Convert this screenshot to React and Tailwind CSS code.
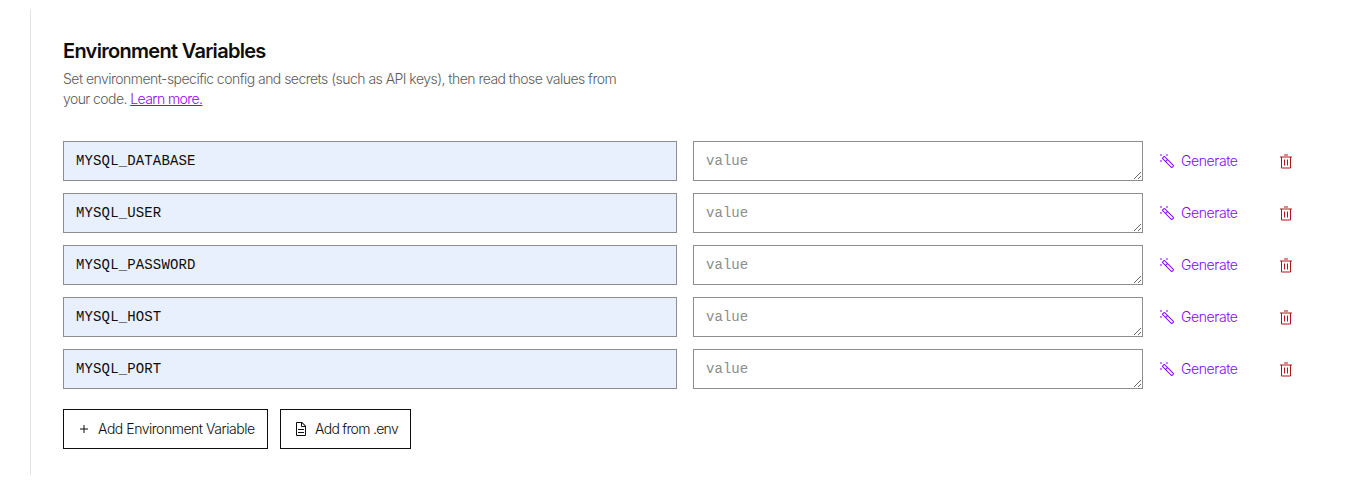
const VARIABLES = ['MYSQL_DATABASE', 'MYSQL_USER', 'MYSQL_PASSWORD', 'MYSQL_HOST', 'MYSQL_PORT'];

function Icon({ children, className = '' }) {
  return (
    <svg viewBox="0 0 32 32" fill="currentColor" aria-hidden="true" className={`size-4 shrink-0 ${className}`}>
      {children}
    </svg>
  );
}

function WandIcon() {
  return (
    <Icon>
      <path d="M29.414 24 12 6.586a2.048 2.048 0 0 0-2.828 0L6.586 9.172a2.002 2.002 0 0 0 0 2.828l17.413 17.414a2.002 2.002 0 0 0 2.828 0l2.587-2.586a2 2 0 0 0 0-2.828ZM8 10.586 10.586 8l5 5-2.587 2.587-5-5ZM25.413 28l-11-10.999L17 14.414l11 10.999Z" />
      <rect x="2.586" y="14.586" width="2.828" height="2.828" transform="rotate(-45 4 16)" />
      <rect x="14.586" y="2.586" width="2.828" height="2.828" transform="rotate(-45 16 4)" />
      <rect x="2.586" y="2.586" width="2.828" height="2.828" transform="rotate(-45 4 4)" />
    </Icon>
  );
}

function TrashIcon() {
  return (
    <Icon>
      <path
        transform="translate(0 1)"
        d="M12 12h2v12h-2zM18 12h2v12h-2zM4 6v2h2v20a2 2 0 0 0 2 2h16a2 2 0 0 0 2-2V8h2V6zm4 22V8h16v20zM12 2h8v2h-8z"
      />
    </Icon>
  );
}

function VariableRow({ name }) {
  return (
    <div className="flex h-10 items-center">
      <input
        defaultValue={name}
        className="h-10 w-[614px] border border-[#8d8d8d] bg-[#e8f0fe] px-3 font-['Liberation_Mono',monospace] text-sm tracking-[0.14px] text-[#0d0d0d] outline-none"
      />
      <textarea
        placeholder="value"
        rows={1}
        className="ml-4 h-10 w-[450px] resize-y overflow-hidden border border-[#8d8d8d] bg-white px-3 pt-[9px] pb-[7px] font-['Liberation_Mono',monospace] text-sm leading-5 tracking-[0.05px] outline-none placeholder:text-[#8d8d8d]"
      />
      <button className="ml-4 flex w-[119px] items-center gap-1.5 text-sm text-[#8a05ff]">
        <WandIcon />
        <span className="font-light tracking-[-0.4px]">Generate</span>
      </button>
      <button aria-label="Delete" className="text-[#b3131f]">
        <TrashIcon />
      </button>
    </div>
  );
}

export default function App() {
  return (
    <main className="h-[485px] bg-white py-2.5 pl-[30px] font-['Inter',sans-serif] text-[#0d0d0d]">
      <section className="h-[465px] border-l border-[#e3e3e3] pl-8 pt-[27px]">
        <h2 className="text-xl leading-7 font-semibold tracking-[-0.7px]">Environment Variables</h2>
        <p className="mt-1 w-[570px] text-sm leading-5 font-light tracking-[-0.53px] whitespace-nowrap text-[#5c5c5c]">
          Set environment-specific config and secrets (such as API keys), then read those values from
          <br />
          <span className="tracking-[-0.58px]">
            your code. <a className="text-[#8a05ff] underline">Learn more.</a>
          </span>
        </p>
        <div className="mt-8 flex flex-col gap-3">
          {VARIABLES.map((name) => (
            <VariableRow key={name} name={name} />
          ))}
        </div>
        <div className="mt-5 flex gap-3 text-sm font-light">
          <button className="flex h-10 w-[205px] items-center gap-1.5 border border-[#0d0d0d] pl-3 whitespace-nowrap">
            <Icon>
              <path d="M17 15V8h-2v7H8v2h7v7h2v-7h7v-2z" />
            </Icon>
            <span className="tracking-[-0.47px]">Add Environment Variable</span>
          </button>
          <button className="flex h-10 w-[131px] items-center gap-1.5 border border-[#0d0d0d] pl-3 whitespace-nowrap">
            <Icon>
              <path d="m25.7 9.3-7-7A.908.908 0 0 0 18 2H8a2.006 2.006 0 0 0-2 2v24a2.006 2.006 0 0 0 2 2h16a2.006 2.006 0 0 0 2-2V10a.908.908 0 0 0-.3-.7ZM18 4.4l5.6 5.6H18ZM24 28H8V4h8v6a2.006 2.006 0 0 0 2 2h6ZM10 22h12v2H10zM10 16h12v2H10z" />
            </Icon>
            <span className="tracking-[-0.7px]">Add from .env</span>
          </button>
        </div>
      </section>
    </main>
  );
}
